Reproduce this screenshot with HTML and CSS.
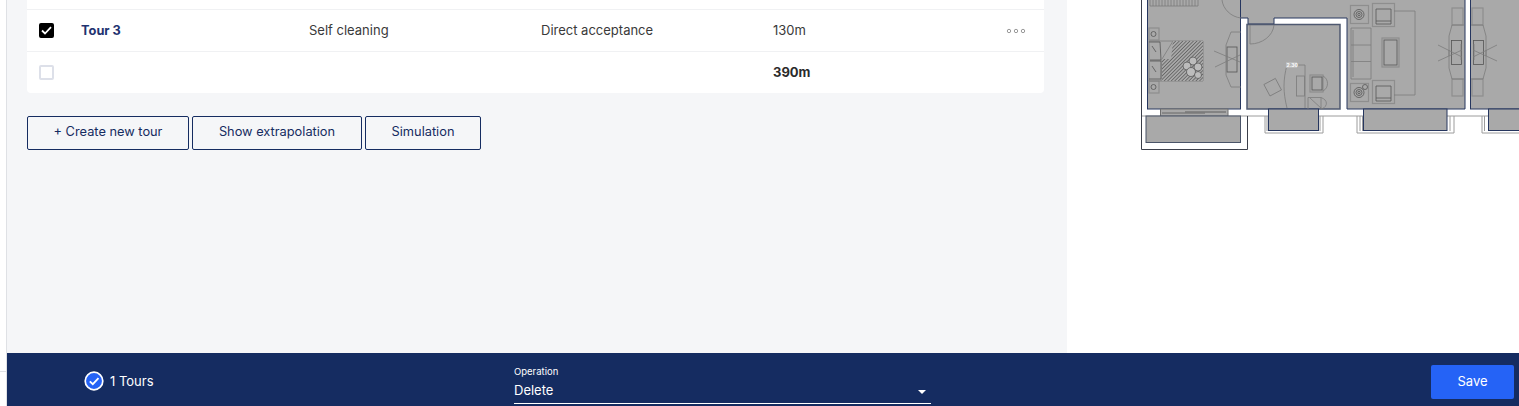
FILE: index.html
```html
<!DOCTYPE html>
<html lang="en">
<head>
    <meta charset="UTF-8">
    <meta name="viewport" content="width=device-width, initial-scale=1.0">
    <title>Tours</title>
    <link rel="stylesheet" href="styles.css">
</head>
<body>
    <div class="sidebar"></div>
    <div class="page">
        <div class="content">
            <div class="panel">
                <div class="table">
                    <div class="row row-cut"></div>
                    <div class="row">
                        <span class="checkbox checked">
                            <svg width="11" height="9" viewBox="0 0 11 9"><path d="M1 4.500 L4 7.500 L10 1.200" fill="none" stroke="#fff" stroke-width="1.800"/></svg>
                        </span>
                        <span class="tour-name">Tour 3</span>
                        <span class="cell">Self cleaning</span>
                        <span class="cell">Direct acceptance</span>
                        <span class="cell">130m</span>
                        <svg class="dots" width="20" height="6" viewBox="0 0 20 6">
                            <circle cx="3" cy="3" r="1.700"/>
                            <circle cx="10" cy="3" r="1.700"/>
                            <circle cx="17" cy="3" r="1.700"/>
                        </svg>
                    </div>
                    <div class="row row-last">
                        <span class="checkbox"></span>
                        <span></span>
                        <span></span>
                        <span></span>
                        <span class="cell total">390m</span>
                    </div>
                </div>
                <div class="actions">
                    <button class="btn btn-create">+ Create new tour</button>
                    <button class="btn btn-extra">Show extrapolation</button>
                    <button class="btn btn-sim">Simulation</button>
                </div>
            </div>
            <div class="plan">
                <svg width="452" height="353" viewBox="1067 0 452 353">
                    <defs>
                        <pattern id="hatch" width="2.500" height="2.500" patternUnits="userSpaceOnUse" patternTransform="rotate(45)">
                            <rect width="2.500" height="2.500" fill="#a9a9a9"/>
                            <line x1="0" y1="0" x2="0" y2="2.500" stroke="#4a4a4a" stroke-width="1.200"/>
                        </pattern>
                        <g id="window-seat" class="furn">
                            <rect x="1452" y="8" width="11" height="17" class="soft"/>
                            <rect x="1452" y="79" width="11" height="17" class="soft"/>
                            <path d="M1464 25 H1452 L1449 36 V68 L1452 79 H1464"/>
                            <rect x="1451.500" y="40.500" width="10" height="24" class="dark"/>
                            <path d="M1449 50 V56 M1461 44 V60"/>
                            <path d="M1438 45 L1462 57 M1438 61 L1462 50"/>
                        </g>
                        <g id="armchair" class="furn">
                            <rect x="0.500" y="0.500" width="22" height="23" class="soft"/>
                            <path class="dark" d="M4 6 H19 V21 M4 6 V21 H19 M4 18 H19"/>
                        </g>
                        <g id="side-table" class="furn">
                            <rect x="0.500" y="0.500" width="18" height="18" class="soft"/>
                            <circle cx="9" cy="9.500" r="5" class="dark"/>
                            <circle cx="9" cy="9.500" r="3" class="dark"/>
                            <circle cx="9" cy="9.500" r="1.200" class="dark"/>
                        </g>
                    </defs>

                    <!-- outer outlines -->
                    <g class="thin">
                        <path d="M1141 116 H1160 M1228 116 H1268 M1318 116 H1364 M1447 116 H1488"/>
                        <path d="M1265 116 V133 H1323 V116 M1267 116 V131 M1320 116 V131"/>
                        <path d="M1357 116 V133 H1454 V116 M1360 116 V131 M1362.500 116 V131 M1450 116 V131"/>
                        <path d="M1482 116 V133 H1519 M1484.500 116 V131"/>
                    </g>
                    <path class="wall" d="M1141.500 0 V149.500 H1247.500 V116"/>

                    <!-- rooms -->
                    <rect class="room" x="1147.500" y="-2" width="93" height="111"/>
                    <path class="floor" d="M1160.500 109 H1228 V116 H1160.500 Z"/>
                    <path d="M1162 113 H1205" stroke="#666" stroke-width="1"/>
                    <path d="M1185 112 H1226" stroke="#777" stroke-width="1.500"/>
                    <rect class="room room-soft" x="1146" y="116" width="94.500" height="26.500"/>
                    <path class="room" d="M1240.500 -2 H1465 V109 H1347 V18 H1274 V24 H1248 V18 H1240.500 Z"/>
                    <rect class="room room-thick" x="1247" y="24.500" width="93" height="84.500"/>
                    <rect class="room" x="1470.500" y="-2" width="60" height="111"/>
                    <rect class="room" x="1268.500" y="109" width="50" height="21.500"/>
                    <rect class="room" x="1363.500" y="109" width="83.500" height="21.500"/>
                    <rect class="room" x="1488.500" y="109" width="40" height="21.500"/>

                    <!-- room 1 -->
                    <g class="furn">
                        <path d="M1150 0 V6 H1198 V0 M1153 0 V6 M1156 0 V6 M1159 0 V6 M1162 0 V6 M1165 0 V6 M1168 0 V6 M1171 0 V6 M1174 0 V6 M1177 0 V6 M1180 0 V6 M1183 0 V6 M1186 0 V6 M1189 0 V6 M1192 0 V6 M1195 0 V6"/>
                        <path d="M1222 0 C1223 9 1231 17 1241 18"/>
                        <rect x="1149" y="28" width="10" height="12" class="soft"/>
                        <circle cx="1153.500" cy="34" r="2.500" class="dark"/>
                        <rect x="1149" y="81" width="10" height="12" class="soft"/>
                        <circle cx="1153.500" cy="87" r="2.500" class="dark"/>
                        <path d="M1149 41 H1203 V81 H1149 Z"/>
                        <path class="dark" d="M1149 42 H1160 L1161 60 H1150 M1150 61 H1161 V79 H1149 M1152 46 L1156 52 M1152 66 L1156 72"/>
                        <path d="M1173 41 L1162 59 L1161 81"/>
                    </g>
                    <path d="M1173 41 H1203 V81 H1162 V59 L1171 59 Z" fill="url(#hatch)"/>
                    <g class="plant">
                        <circle cx="1193" cy="61" r="4"/>
                        <circle cx="1187" cy="66" r="4"/>
                        <circle cx="1198" cy="67" r="4"/>
                        <circle cx="1191" cy="72" r="4.500"/>
                        <circle cx="1198" cy="75" r="3.500"/>
                    </g>
                    <g class="furn">
                        <rect x="1227" y="47" width="10" height="25" class="dark"/>
                        <path d="M1241 32 H1231 L1226 45 V75 L1231 87 H1241"/>
                        <path d="M1214 51 L1240 62 M1215 67 L1240 55"/>
                    </g>

                    <!-- room 2 -->
                    <g class="furn">
                        <path d="M1250 25 V44 C1262 44 1273 36 1274 25"/>
                        <path d="M1287 108 C1283 92 1283 80 1287 65 H1305 V108"/>
                        <rect x="1296.500" y="76" width="8" height="20"/>
                        <rect x="1266" y="81" width="13" height="13" transform="rotate(-28 1272 87)"/>
                        <rect x="1310" y="75" width="13" height="17" class="soft"/>
                        <rect x="1312" y="77" width="10" height="13" class="dark"/>
                        <path d="M1323 76 C1329 79 1329 88 1323 91"/>
                        <path d="M1308 97.500 H1321 C1328 100 1328 106 1322 109 M1308 97.500 V109 M1310 98 L1322 109 M1321 97.500 V109"/>
                    </g>
                    <rect class="tag" x="1286" y="62" width="11" height="6"/>
                    <text class="tag-text" x="1286.500" y="67">2.30</text>

                    <!-- room 3 -->
                    <use href="#side-table" x="1350" y="5"/>
                    <use href="#armchair" x="1372" y="3"/>
                    <use href="#side-table" x="1350" y="83"/>
                    <use href="#armchair" x="1372" y="80"/>
                    <g class="furn">
                        <path d="M1394 11 H1415 V95 H1394"/>
                        <path d="M1371 28 H1351 V79 H1371 V28 M1351 45 H1371 M1351 61.500 H1371 M1353 30 V77"/>
                        <rect x="1382" y="38" width="17" height="29" class="soft"/>
                        <rect x="1384" y="40" width="13" height="25" class="dark"/>
                        <circle cx="1365" cy="87" r="2.500" class="dark"/>
                    </g>
                    <use href="#window-seat"/>
                    <use href="#window-seat" transform="translate(2935 0) scale(-1 1)"/>
                </svg>
            </div>
        </div>
        <div class="footer">
            <div class="footer-count">
                <svg width="20" height="20" viewBox="0 0 20 20">
                    <circle cx="10" cy="10" r="8.800" fill="#2563f6" stroke="#fff" stroke-width="1.700"/>
                    <path d="M5.800 10.300 L8.800 13.200 L14.500 7.200" fill="none" stroke="#fff" stroke-width="1.800"/>
                </svg>
                <span>1 Tours</span>
            </div>
            <div class="footer-select">
                <label>Operation</label>
                <div class="select-value">
                    <span>Delete</span>
                    <span class="select-arrow"></span>
                </div>
            </div>
            <button class="save-btn">Save</button>
        </div>
    </div>
</body>
</html>
```

FILE: styles.css
```css
:root {
    --navy: #152c61;
    --link-navy: #1f3370;
    --blue: #2563f6;
    --panel-bg: #f5f6f8;
    --line: #f0f1f3;
    --text: #3a3a3a;
}
html, body {
    height: 100%;
}
body {
    margin: 0;
    height: 406px;
    overflow: hidden;
    display: flex;
    font-family: Inter, 'Liberation Sans', sans-serif;
    font-size: 13px;
    color: var(--text);
    background-color: #fff;
}
.sidebar {
    width: 6px;
    height: 371px;
    flex: none;
    border-bottom: 1px solid #dfe1e5;
}
.page {
    flex: 1;
    display: flex;
    flex-direction: column;
    border-left: 1px solid #dfe1e5;
    min-width: 0;
}
.content {
    height: 353px;
    display: flex;
}
.panel {
    width: 1060px;
    box-sizing: border-box;
    padding: 0 23px 0 20px;
    background-color: var(--panel-bg);
}
.table {
    background-color: #fff;
    border-radius: 0 0 4px 4px;
}
.row {
    height: 41px;
    display: grid;
    grid-template-columns: 54px 228px 232px 232px 1fr 38px;
    align-items: center;
    border-bottom: 1px solid var(--line);
}
.row-cut {
    height: 9px;
}
.row-last {
    border-bottom: none;
}
.cell {
    padding-bottom: 2px;
}
.checkbox {
    width: 15px;
    height: 15px;
    margin-left: 12px;
    box-sizing: border-box;
    border: 2px solid #dde0e9;
    border-radius: 2px;
    display: flex;
    align-items: center;
    justify-content: center;
}
.checkbox.checked {
    background-color: #000;
    border-color: #000;
}
.tour-name {
    font-size: 12.800px;
    font-weight: 700;
    color: var(--link-navy);
}
.total {
    font-weight: 700;
    color: #2b2b2b;
}
.dots {
    fill: none;
    stroke: #9a9a9a;
    stroke-width: 1;
}
.actions {
    margin-top: 23px;
    display: flex;
    gap: 3px;
}
.btn {
    height: 34px;
    padding: 0 0 3px;
    font-family: inherit;
    font-size: 12.800px;
    color: var(--navy);
    background: transparent;
    border: 1px solid var(--navy);
    border-radius: 2px;
}
.btn-create {
    width: 162px;
}
.btn-extra {
    width: 170px;
}
.btn-sim {
    width: 116px;
}
.plan {
    flex: 1;
    overflow: hidden;
}
.plan svg {
    display: block;
}
.wall {
    fill: none;
    stroke: #3b3f4a;
    stroke-width: 1;
}
.thin {
    fill: none;
    stroke: #9c9c9c;
    stroke-width: 1;
}
.room {
    fill: #a9a9a9;
    stroke: #26365f;
    stroke-width: 1;
}
.room-soft {
    stroke: #4a5468;
}
.room-thick {
    stroke: #4f5970;
    stroke-width: 1.500;
}
.floor {
    fill: #a9a9a9;
    stroke: #6e6e6e;
    stroke-width: 1;
}
.furn,
.furn rect,
.furn circle,
.furn path {
    fill: none;
    stroke: #7c7c7c;
    stroke-width: 0.800;
}
.furn .dark {
    stroke: #555;
}
.furn .soft {
    stroke: #8e8e8e;
    stroke-width: 1.200;
}
.plant circle {
    fill: #bcbcbc;
    stroke: #505050;
    stroke-width: 0.700;
}
.tag {
    fill: #b9b9b9;
}
.tag-text {
    font-size: 5px;
    font-weight: 700;
    fill: #fff;
}
.footer {
    height: 53px;
    display: flex;
    align-items: center;
    background-color: var(--navy);
    color: #fff;
}
.footer-count {
    width: 507px;
    box-sizing: border-box;
    margin-top: 3px;
    padding-left: 77px;
    display: flex;
    align-items: center;
    gap: 6px;
    font-size: 13px;
}
.footer-count svg {
    display: block;
}
.footer-select {
    width: 417px;
    align-self: flex-end;
    margin-bottom: 2px;
    border-bottom: 1px solid #fff;
}
.footer-select label {
    display: block;
    font-size: 9.500px;
    line-height: 11px;
}
.select-value {
    display: flex;
    justify-content: space-between;
    align-items: center;
    height: 26px;
    padding-right: 5px;
    font-size: 13px;
}
.select-arrow {
    width: 0;
    height: 0;
    margin-top: 3px;
    border-left: 4px solid transparent;
    border-right: 4px solid transparent;
    border-top: 4px solid #fff;
}
.save-btn {
    margin: 4px 5px 0 auto;
    width: 83px;
    height: 34px;
    padding: 0 0 2px;
    font-family: inherit;
    font-size: 13px;
    color: #fff;
    background-color: var(--blue);
    border: none;
    border-radius: 2px;
}
```
